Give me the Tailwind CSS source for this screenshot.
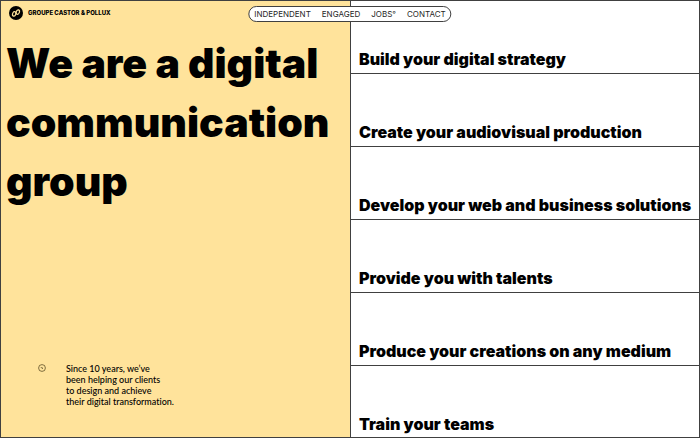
<!DOCTYPE html>
<html lang="en">
<head>
    <meta charset="UTF-8">
    <meta name="viewport" content="width=device-width, initial-scale=1.0">
    <title>Groupe Castor &amp; Pollux</title>
    <script src="https://cdn.jsdelivr.net/npm/@tailwindcss/browser@4"></script>
</head>
<body class="bg-white text-black font-['Inter',sans-serif]">
    <nav class="absolute top-[6px] left-1/2 -translate-x-1/2 z-10 flex gap-[11px] items-center h-4 px-[5px] bg-white border border-neutral-700 rounded-full text-[8px] leading-none text-neutral-800 whitespace-nowrap">
        <a href="#independent">INDEPENDENT</a>
        <a href="#engaged">ENGAGED</a>
        <a href="#jobs">JOBS°</a>
        <a href="#contact">CONTACT</a>
    </nav>
    <div class="grid grid-cols-2 min-h-screen">
        <main class="flex flex-col bg-[#ffe39b] border-y border-l border-neutral-700">
            <a href="#home" class="flex items-center gap-[5px] px-2 pt-[5px]">
                <svg class="w-[14px] h-[14px]" viewBox="0 0 14 14" fill="none">
                    <circle cx="7" cy="7" r="7" fill="#000"/>
                    <g stroke="#ffe39b" stroke-width="1.2" stroke-linecap="round">
                        <ellipse cx="5.2" cy="7.9" rx="1.6" ry="2.3" transform="rotate(20 5.2 7.9)"/>
                        <ellipse cx="8.8" cy="6.1" rx="1.6" ry="2.3" transform="rotate(20 8.8 6.1)"/>
                    </g>
                </svg>
                <span class="text-[6px] leading-none font-extrabold whitespace-nowrap">GROUPE CASTOR &amp; POLLUX</span>
            </a>
            <h1 class="px-[5px] pt-[14px] text-[41px] leading-[59px] font-black">We are a digital<br>communication<br>group</h1>
            <div class="mt-auto flex gap-5 pl-[37px] pb-[30px]">
                <svg class="w-2 h-2 mt-px" viewBox="0 0 8 8" fill="none" stroke="#4a3d18">
                    <circle cx="4" cy="4" r="3.4" stroke-width=".7"/>
                    <path d="M3 3.2L4 4.4L5 3.9" stroke-width=".9"/>
                </svg>
                <p class="text-[9px] leading-[11px] font-medium font-['Lato',sans-serif] [font-variant-ligatures:none]">Since 10 years, we’ve<br>been helping our clients<br>to design and achieve<br>their digital transformation.</p>
            </div>
        </main>
        <ul class="grid grid-rows-6 border-x border-neutral-700 text-[16px] leading-5 font-black whitespace-nowrap">
            <li class="flex items-end px-2 pb-1 border-t border-neutral-700"><a href="#strategy">Build your digital strategy</a></li>
            <li class="flex items-end px-2 pb-1 border-t border-neutral-700"><a href="#production">Create your audiovisual production</a></li>
            <li class="flex items-end px-2 pb-1 border-t border-neutral-700"><a href="#web">Develop your web and business solutions</a></li>
            <li class="flex items-end px-2 pb-1 border-t border-neutral-700"><a href="#talents">Provide you with talents</a></li>
            <li class="flex items-end px-2 pb-1 border-t border-neutral-700"><a href="#creations">Produce your creations on any medium</a></li>
            <li class="flex items-end px-2 pb-[3px] border-y border-neutral-700"><a href="#teams">Train your teams</a></li>
        </ul>
    </div>
</body>
</html>
